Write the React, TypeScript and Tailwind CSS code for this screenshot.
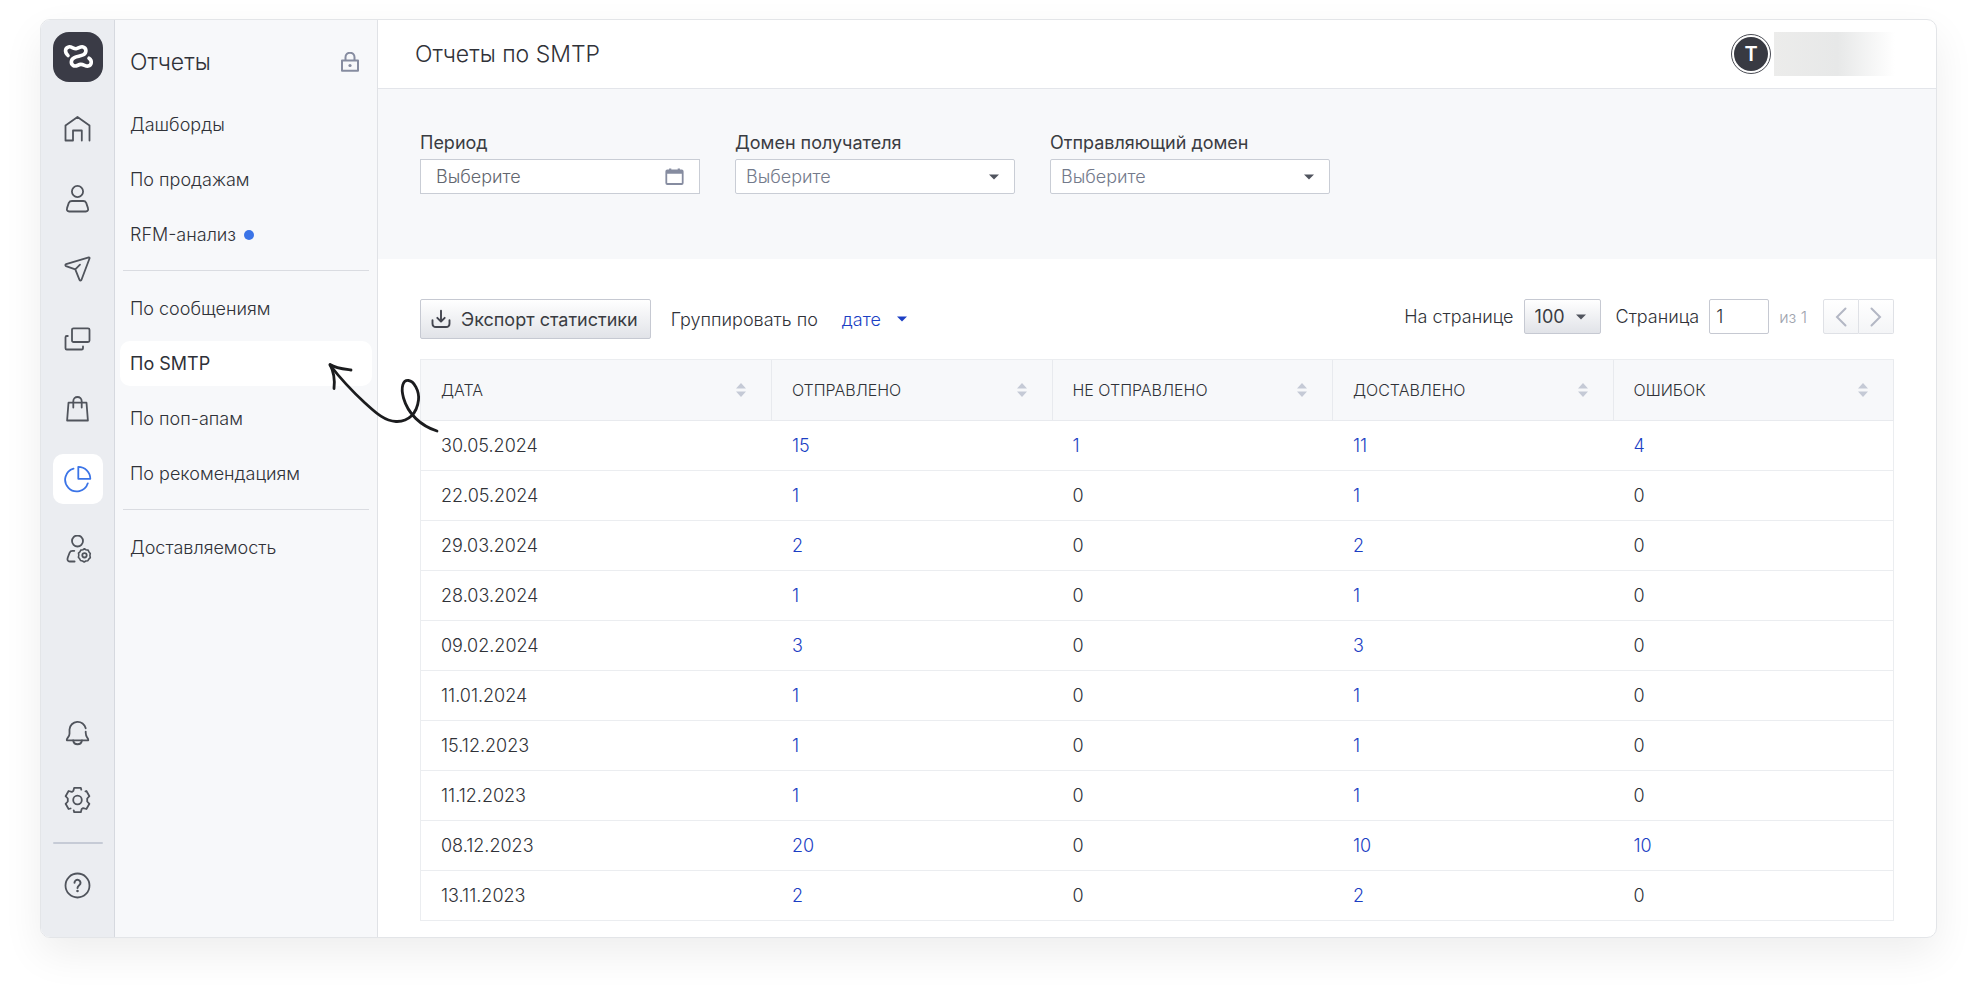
import React from 'react';

const columns = ['Дата', 'Отправлено', 'Не отправлено', 'Доставлено', 'Ошибок'];

const rows = [
  ['30.05.2024', 15, 1, 11, 4],
  ['22.05.2024', 1, 0, 1, 0],
  ['29.03.2024', 2, 0, 2, 0],
  ['28.03.2024', 1, 0, 1, 0],
  ['09.02.2024', 3, 0, 3, 0],
  ['11.01.2024', 1, 0, 1, 0],
  ['15.12.2023', 1, 0, 1, 0],
  ['11.12.2023', 1, 0, 1, 0],
  ['08.12.2023', 20, 0, 10, 10],
  ['13.11.2023', 2, 0, 2, 0],
];

const menuGroups = [
  [{ label: 'Дашборды' }, { label: 'По продажам' }, { label: 'RFM-анализ', isNew: true }],
  [
    { label: 'По сообщениям' },
    { label: 'По SMTP', active: true },
    { label: 'По поп-апам' },
    { label: 'По рекомендациям' },
  ],
  [{ label: 'Доставляемость' }],
] as { label: string; isNew?: boolean; active?: boolean }[][];

const Icon = ({ children }: { children: React.ReactNode }) => (
  <svg
    className="size-7"
    viewBox="0 0 28 28"
    fill="none"
    stroke="currentColor"
    strokeWidth="1.8"
    strokeLinecap="round"
    strokeLinejoin="round"
    aria-hidden="true"
  >
    {children}
  </svg>
);

const mainNav = [
  {
    name: 'Главная',
    icon: <path d="M1.500 25.500V10.500L13.500 2l12 8.500v15M1.500 25.500h7.500V15.500h8.800v10" />,
  },
  {
    name: 'Контакты',
    icon: (
      <>
        <circle cx="13.500" cy="6.500" r="5.600" />
        <path d="M8 16h11.300c1.500 0 2.300.6 2.900 1.900l1.700 5c.7 2.400-.2 3.600-2.100 3.600H5.200c-1.900 0-2.800-1.200-2.100-3.600l1.700-5C5.400 16.600 6.500 16 8 16Z" />
      </>
    ),
  },
  {
    name: 'Сообщения',
    icon: (
      <path d="M24.800 2.300 2.100 9.100c-1 .4-1 1.500-.1 2l9.300 3.300 4.200 10.400c.5 1 1.700.9 2-.1L25.600 3.300c.1-.7-.2-1.100-.8-1ZM11.300 14.400l4.700-4.700" />
    ),
  },
  {
    name: 'Поп-апы',
    icon: (
      <>
        <rect x="8" y="3.300" width="17.500" height="13.700" rx="1.500" />
        <path d="M3.800 11h-1c-.9 0-1.300.5-1.300 1.300v10.900c0 .9.500 1.300 1.300 1.300h14.900c.9 0 1.300-.5 1.300-1.300v-1.700" />
      </>
    ),
  },
  {
    name: 'Магазин',
    icon: (
      <>
        <path d="M4.500 7.700h18l1.400 17.800H3.100L4.500 7.700Z" />
        <path d="M9.300 12.500V6.200a4.200 4.200 0 0 1 8.400 0v6.300" />
      </>
    ),
  },
  {
    name: 'Отчеты',
    active: true,
    icon: (
      <>
        <path d="M9.500 3.600a11.600 11.600 0 1 0 14.300 14.700" />
        <path d="M14.300 1.800a12 12 0 0 1 12 12h-12v-12Z" />
      </>
    ),
  },
  {
    name: 'Пользователи',
    icon: (
      <>
        <circle cx="13.500" cy="6" r="5.500" />
        <path d="M10.300 15.800H8.500c-1.500 0-2.400.6-2.900 1.900l-1.900 5c-.7 2.200.1 3.800 2 3.800h4.900" />
        <path
          d="m18.900 14.700 1.500-.9 1.500.9 2.200.4.900 1.800 1.300 1.500-.4 2 .4 2.200-1.500 1.500-.9 1.600-2.100.3-1.600 1-1.700-1-2-.5-.9-1.800-1.200-1.400.4-2.100-.3-2 1.400-1.300.9-1.800Z"
          strokeWidth="1.600"
        />
        <circle cx="20.500" cy="20.300" r="2.200" />
      </>
    ),
  },
];

const bottomNav = [
  {
    name: 'Уведомления',
    icon: (
      <>
        <path d="M21.700 9.300A8.200 8.200 0 0 0 5.500 10.500v4.200c0 1.500-.5 2.400-1.500 3.700-1.200 1.500-1.500 2.100-1.200 2.900h21.500c.2-.9-.1-1.500-1.200-2.900-.9-1.200-1.300-2.200-1.400-4.600v-1.200" />
        <path d="M9.200 21.500a4.400 4.400 0 0 0 8.700 0" />
      </>
    ),
  },
  {
    name: 'Настройки',
    icon: (
      <>
        <circle cx="13.500" cy="14" r="4.300" />
        <path d="M17.300 3.700l-.5-1.900h-6.600l-.9 3.200-1.500.9-3.200-.9-3 5.200 2.200 2.300v3l-2.200 2.300 3 5.200 2-.5M9.700 24.300l.5 1.900h6.600l.9-3.200 1.500-.9 3.200.9 3-5.200-2.200-2.300v-3l2.200-2.300-3-5.200-1 .3" />
      </>
    ),
  },
];

const HelpIcon = () => (
  <Icon>
    <circle cx="13.500" cy="13.500" r="12" />
    <path d="M10.500 10.800a3 3 0 1 1 4.900 2.300c-1.200 1-1.900 1.600-1.900 3" strokeWidth="2" />
    <circle cx="13.500" cy="19" r=".7" strokeWidth="1.200" />
  </Icon>
);

const Caret = ({ className }: { className: string }) => (
  <svg className={className} viewBox="0 0 10 6" fill="currentColor" aria-hidden="true">
    <path d="M0 .5h10L5 5.500Z" />
  </svg>
);

const NavButton = ({ name, icon, active }: { name: string; icon: React.ReactNode; active?: boolean }) => (
  <button
    type="button"
    aria-label={name}
    className={`flex size-[50px] items-center justify-center rounded-[10px] ${
      active ? 'bg-white text-[#3b74e7]' : 'text-[#50545c]'
    }`}
  >
    <Icon>{icon}</Icon>
  </button>
);

const Rail = () => (
  <nav className="flex w-[74px] shrink-0 flex-col items-center border-r border-[#d6d9df] bg-[#ebedf1] pt-3 pb-[26px]">
    <a
      href="#"
      aria-label="На главную"
      className="mb-[22px] flex size-[50px] items-center justify-center rounded-2xl bg-[#3a3b46]"
    >
      <svg className="size-8" viewBox="0 0 32 32" fill="none" stroke="#fff" strokeWidth="3.600" strokeLinecap="round" aria-hidden="true">
        <path d="M6 14.500C2.500 11.500 2.800 6.800 6.600 5.900c3-.7 4.800 2 7.500 1.800 2.600-.1 4.100-2.500 6.900-1.800 3.600.9 4 5.800.4 7.900-2.500 1.400-6.300 1.500-9 2.800-3.500 1.600-4.200 6-1 8 2.500 1.500 4.600-.9 7.200-1.200 3-.3 4.900 2.200 7.500 1.700 3.600-.8 4.500-5.300.9-7.900" />
      </svg>
    </a>
    <div className="flex flex-col gap-5">
      {mainNav.map((item) => (
        <NavButton key={item.name} {...item} />
      ))}
    </div>
    <div className="mt-auto flex flex-col gap-[17px]">
      {bottomNav.map((item) => (
        <NavButton key={item.name} {...item} />
      ))}
      <div className="h-[2px] rounded-full bg-[#c6cbd6]" />
      <button type="button" aria-label="Помощь" className="flex size-[50px] items-center justify-center text-[#50545c]">
        <HelpIcon />
      </button>
    </div>
  </nav>
);

const Sidebar = () => (
  <aside className="w-[263px] shrink-0 border-r border-[#e0e2e6] bg-[#f7f8fa] px-[5px]">
    <div className="mb-[22px] flex items-center justify-between pt-6 pr-3 pl-[10px]">
      <h2 className="text-[23px] leading-9 font-light text-[#303238]">Отчеты</h2>
      <svg className="size-5" viewBox="0 0 20 20" fill="none" stroke="#868ca0" strokeWidth="2" aria-hidden="true">
        <path d="M2 8.400h16v10.300H2ZM5.500 8.400V5.200a4.500 4.500 0 0 1 9 0v3.200" strokeLinejoin="round" />
        <circle cx="10" cy="13.500" r="1.600" fill="#868ca0" stroke="none" />
      </svg>
    </div>
    {menuGroups.map((group, i) => (
      <React.Fragment key={group[0].label}>
        {i > 0 && <hr className="mx-[3px] mt-[13px] mb-[15px] border-[#dadce1]" />}
        <ul className="flex flex-col gap-[10px]">
          {group.map((item) => (
            <li key={item.label}>
              <a
                href="#"
                className={`flex h-[45px] items-center gap-2 rounded-[10px] px-[10px] text-[18px] ${
                  item.active ? 'bg-white font-normal text-[#2f3138]' : 'font-light text-[#303238]'
                }`}
              >
                {item.label}
                {item.isNew && <span className="size-[10px] rounded-full bg-[#3b74e7]" />}
              </a>
            </li>
          ))}
        </ul>
      </React.Fragment>
    ))}
  </aside>
);

const SelectFilter = ({ id, label }: { id: string; label: string }) => (
  <div className="w-[280px]">
    <label htmlFor={id} className="mb-1 block text-[18px] leading-6 text-[#3a3c42]">
      {label}
    </label>
    <div className="relative">
      <select
        id={id}
        className="h-[35px] w-full appearance-none rounded-xs border border-[#c9cdd5] bg-white pr-8 pl-[10px] text-[18px] font-light text-[#737a8b]"
      >
        <option>Выберите</option>
      </select>
      <Caret className="pointer-events-none absolute top-[15px] right-4 h-[6px] w-[10px] text-[#50545e]" />
    </div>
  </div>
);

const Filters = () => (
  <section className="flex flex-wrap gap-[35px] bg-[#f7f8fa] px-[42px] pt-[42px] pb-[65px]">
    <div className="w-[280px]">
      <label htmlFor="period" className="mb-1 block text-[18px] leading-6 text-[#3a3c42]">
        Период
      </label>
      <div className="relative">
        <input
          id="period"
          type="text"
          placeholder="Выберите"
          className="h-[35px] w-full border border-[#c9cdd5] bg-white pr-11 pl-[15px] text-[18px] font-light text-[#303238] placeholder:text-[#62666f]"
        />
        <svg className="pointer-events-none absolute top-2 right-4 size-[19px]" viewBox="0 0 19 19" fill="none" stroke="#868ca0" strokeWidth="1.800" aria-hidden="true">
          <rect x="1.300" y="3.500" width="16.400" height="13.500" rx="1" />
          <path d="M1.500 5.200h16" strokeWidth="3" />
          <path d="M5.200 1.500v3M13.800 1.500v3" strokeWidth="2.200" />
        </svg>
      </div>
    </div>
    <SelectFilter id="recipient-domain" label="Домен получателя" />
    <SelectFilter id="sender-domain" label="Отправляющий домен" />
  </section>
);

const Toolbar = () => (
  <div className="mb-5 flex flex-wrap items-start justify-between gap-4">
    <div className="flex items-center">
      <button
        type="button"
        className="flex h-10 items-center gap-[10px] rounded-xs border border-[#c6c9d2] bg-linear-to-b from-white to-[#e1e3e8] pr-3 pl-[10px] text-[18px] text-[#3a3c42]"
      >
        <svg className="size-5" viewBox="0 0 20 20" fill="none" stroke="#43454f" strokeWidth="1.900" strokeLinecap="round" strokeLinejoin="round" aria-hidden="true">
          <path d="M10 1.800v10.500M6.300 8.800l3.700 3.700 3.700-3.700M1.500 11.300v3.200c0 2.300 1.300 3.500 3.500 3.500h10c2.200 0 3.500-1.200 3.500-3.500v-3.200" />
        </svg>
        Экспорт статистики
      </button>
      <span className="ml-5 text-[18px] font-light text-[#303238]">Группировать по</span>
      <button type="button" className="ml-6 flex items-center gap-4 text-[18px] font-light text-[#1c3fc4]">
        дате
        <Caret className="h-[6px] w-[10px]" />
      </button>
    </div>
    <div className="flex items-center text-[18px] font-light text-[#303238]">
      <label htmlFor="per-page">На странице</label>
      <div className="relative ml-[10px]">
        <select
          id="per-page"
          className="h-[35px] w-[77px] appearance-none rounded-xs border border-[#c6c9d2] bg-linear-to-b from-white to-[#e1e3e8] pl-[10px] font-normal text-[#3a3c42]"
        >
          <option>100</option>
        </select>
        <Caret className="pointer-events-none absolute top-[15px] right-[15px] h-[6px] w-[10px] text-[#50545e]" />
      </div>
      <label htmlFor="page" className="ml-[15px]">
        Страница
      </label>
      <input
        id="page"
        type="text"
        defaultValue="1"
        className="ml-[10px] h-[35px] w-[60px] rounded-xs border border-[#c6c9d2] bg-white px-[6px] text-[18px]"
      />
      <span className="ml-[10px] text-base text-[#9ea3ae]">из 1</span>
      <div className="ml-4 flex text-[#b3b7c4]">
        <button
          type="button"
          aria-label="Предыдущая страница"
          className="flex h-[35px] w-9 items-center justify-center rounded-l-xs border border-[#dfe1e6] bg-linear-to-b from-white to-[#f4f5f7]"
        >
          <svg className="h-5 w-3" viewBox="0 0 12 20" fill="none" stroke="currentColor" strokeWidth="2" strokeLinecap="round" aria-hidden="true">
            <path d="M10.500 1.500 2 10l8.500 8.500" />
          </svg>
        </button>
        <button
          type="button"
          aria-label="Следующая страница"
          className="flex h-[35px] w-[35px] items-center justify-center rounded-r-xs border border-l-0 border-[#dfe1e6] bg-linear-to-b from-white to-[#f4f5f7]"
        >
          <svg className="h-5 w-3" viewBox="0 0 12 20" fill="none" stroke="currentColor" strokeWidth="2" strokeLinecap="round" aria-hidden="true">
            <path d="M1.500 1.500 10 10l-8.500 8.500" />
          </svg>
        </button>
      </div>
    </div>
  </div>
);

const ReportTable = () => (
  <table className="w-full table-fixed border-separate border-spacing-0 border-t border-l border-[#ebedf0] text-left text-[#303238]">
    <thead>
      <tr>
        {columns.map((title, i) => (
          <th
            key={title}
            scope="col"
            className={`h-[61px] border-r border-b border-[#e8eaee] bg-[#f7f8fa] pr-[25px] pl-5 font-light ${
              i === 0 ? 'w-[351px]' : ''
            }`}
          >
            <div className="flex items-center justify-between text-base uppercase">
              {title}
              <svg className="h-[14px] w-[10px]" viewBox="0 0 10 14" fill="#c5cad6" aria-hidden="true">
                <path d="M5 0l5 5.500H0ZM5 14l5-5.500H0Z" />
              </svg>
            </div>
          </th>
        ))}
      </tr>
    </thead>
    <tbody>
      {rows.map((row) => (
        <tr key={row[0]}>
          {row.map((value, i) => (
            <td
              key={columns[i]}
              className="h-[50px] border-b border-[#ebedf0] pl-5 text-[18px] font-light last:border-r"
            >
              {i > 0 && value !== 0 ? (
                <a href="#" className="text-[#1c3fc4]">
                  {value}
                </a>
              ) : (
                value
              )}
            </td>
          ))}
        </tr>
      ))}
    </tbody>
  </table>
);

// hand-drawn pointer from the table to the active menu item
const PointerArrow = () => (
  <svg
    className="pointer-events-none absolute top-[340px] left-[284px] h-[76px] w-[118px]"
    viewBox="324 359 118 76"
    fill="none"
    stroke="#1b1c1e"
    strokeWidth="2.800"
    strokeLinecap="round"
    strokeLinejoin="round"
    aria-hidden="true"
  >
    <path d="M437 431C421 426 408 414 403.500 398C400.500 387 403 380 408.500 380.500C414 381 419.500 391 418.500 400C417 413 409 422 396 421.500C384 421 375 412 365 403C352 391 340 378 330 365" />
    <path d="M334 388.500C335 380 334 372 330 364.500C336 368.500 343 369 351 370" />
  </svg>
);

export default function App() {
  return (
    <div className="bg-white pt-[19px] pr-[39px] pb-[59px] pl-10 font-['Inter',sans-serif]">
      <div className="relative rounded-[10px] shadow-[0_16px_40px_rgba(0,0,0,0.07)]">
        <div className="flex overflow-hidden rounded-[10px] border border-[#e3e5e8] bg-white">
          <Rail />
          <Sidebar />
          <main className="min-w-0 flex-1">
            <header className="flex h-[69px] items-center justify-between border-b border-[#e3e5ea] pr-[35px] pl-[37px]">
              <h1 className="text-[23px] font-light text-[#303238]">Отчеты по SMTP</h1>
              <div className="flex items-center gap-[3px]">
                <span className="flex size-10 items-center justify-center rounded-full border border-[#4a4c54] p-[2px]">
                  <span className="flex size-full items-center justify-center rounded-full bg-[#383a42] text-xl font-semibold text-white">
                    T
                  </span>
                </span>
                <span className="h-11 w-[127px] bg-linear-to-r from-[#ececeb] via-[#e7e8e8] via-50% to-white to-95%" />
              </div>
            </header>
            <Filters />
            <section className="px-[42px] pt-10 pb-4">
              <Toolbar />
              <ReportTable />
            </section>
          </main>
        </div>
        <PointerArrow />
      </div>
    </div>
  );
}
